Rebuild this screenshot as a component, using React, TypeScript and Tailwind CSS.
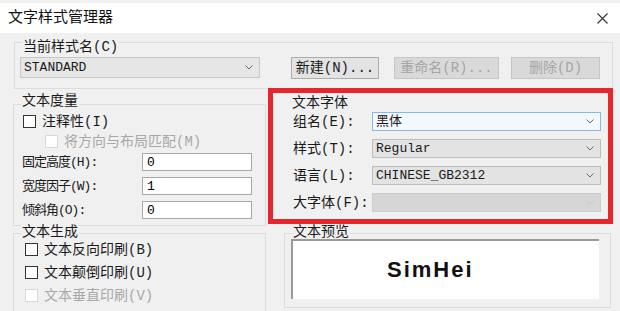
import React from "react";

const MONO = "font-['Liberation_Mono','Noto_Sans_CJK_SC',monospace]";

function Chevron({ faint }: { faint?: boolean }) {
  return (
    <svg width="8" height="5" viewBox="0 0 8 5" className="shrink-0">
      <polyline
        points="0.5,0.5 4,4 7.5,0.5"
        fill="none"
        stroke={faint ? "#c8c8c8" : "#6a6a6a"}
        strokeWidth="1"
      />
    </svg>
  );
}

function Combo({
  value,
  tone,
  className,
}: {
  value?: string;
  tone: "focus" | "gray" | "disabled";
  className: string;
}) {
  const look =
    tone === "focus"
      ? "bg-[#f2f8fd] border-[#86b8e8]"
      : tone === "gray"
        ? "bg-[#e3e3e3] border-[#bdbdbd]"
        : "bg-[#d6d6d6] border-[#cdcdcd]";
  return (
    <div
      className={`flex items-center justify-between border pl-[3px] pr-[6px] ${look} ${className}`}
    >
      <span className={`${MONO} text-[13px] leading-none text-[#1a1a1a]`}>{value}</span>
      <Chevron faint={tone === "disabled"} />
    </div>
  );
}

function Check({ label, disabled, className }: { label: string; disabled?: boolean; className?: string }) {
  return (
    <div className={`flex h-[17px] items-center ${className ?? ""}`}>
      <div
        className={`h-[13px] w-[13px] shrink-0 border bg-white ${disabled ? "border-[#d8d8d8]" : "border-[#333333]"}`}
      />
      <span className={`ml-[6px] text-[14px] leading-none ${disabled ? "text-[#a8a8a8]" : "text-[#1a1a1a]"}`}>
        {label}
      </span>
    </div>
  );
}

function Field({ label, value, className }: { label: string; value: string; className?: string }) {
  return (
    <div className={`flex h-[18px] items-center ${className ?? ""}`}>
      <span className="w-[128px] pl-[8px] text-[13px] leading-none tracking-[-1px] text-[#1a1a1a]">{label}</span>
      <div className="flex h-[18px] w-[110px] items-center border border-[#a9a9a9] bg-white pl-[4px]">
        <span className={`${MONO} text-[13px] leading-none`}>{value}</span>
      </div>
    </div>
  );
}

function Button({ label, disabled, className }: { label: string; disabled?: boolean; className: string }) {
  return (
    <div
      className={`flex h-[22px] items-center justify-center border text-[14px] leading-none ${
        disabled ? "border-[#c6c6c6] bg-[#d9d9d9] text-[#a6a6a6]" : "border-[#adadad] bg-[#e3e3e3] text-[#1a1a1a]"
      } ${className}`}
    >
      {label}
    </div>
  );
}

function Legend({ children, className }: { children: React.ReactNode; className: string }) {
  return (
    <div
      className={`ml-[7px] h-[16px] w-fit bg-[#f0f0f0] px-[1px] text-[14px] leading-[16px] text-[#1a1a1a] ${className}`}
    >
      {children}
    </div>
  );
}

export default function App() {
  return (
    <div className="h-[311px] w-[620px] overflow-hidden bg-[#f0f0f0] font-['Liberation_Mono','Noto_Sans_CJK_SC',monospace] text-black">
      {/* title bar */}
      <div className="mt-[3px] flex h-[30px] items-center justify-between bg-white pl-[8px] pr-[12px]">
        <span className="text-[15px] leading-none text-[#111]">文字样式管理器</span>
        <svg width="11" height="11" viewBox="0 0 11 11">
          <path d="M0.5 0.5 L10.5 10.5 M10.5 0.5 L0.5 10.5" stroke="#3a3a3a" strokeWidth="1.2" />
        </svg>
      </div>

      {/* current style */}
      <div className="ml-[14px] mt-[9px] h-[47px] w-[599px] border border-[#dcdcdc]">
        <Legend className="-mt-[4px]">当前样式名(C)</Legend>
        <div className="mt-[2px] flex items-start">
          <Combo value="STANDARD" tone="gray" className="ml-[5px] h-[21px] w-[240px] !border-[#c8c8c8] !bg-[#e6e6e6]" />
          <Button label="新建(N)..." className="ml-[31px] w-[88px]" />
          <Button label="重命名(R)..." disabled className="ml-[15px] w-[105px]" />
          <Button label="删除(D)" disabled className="ml-[12px] w-[89px]" />
        </div>
      </div>

      <div className="flex">
        {/* left column */}
        <div className="ml-[13px] w-[253px]">
          <div className="mt-[15px] h-[122px] border border-[#dcdcdc]">
            <Legend className="-mt-[12px]">文本度量</Legend>
            <Check label="注释性(I)" className="ml-[9px] mt-[4px]" />
            <Check label="将方向与布局匹配(M)" disabled className="ml-[31px] mt-[3px]" />
            <Field label="固定高度(H):" value="0" className="mt-[3px]" />
            <Field label="宽度因子(W):" value="1" className="mt-[6px]" />
            <Field label="倾斜角(O):" value="0" className="mt-[6px]" />
          </div>

          <div className="mt-[7px] h-[92px] border border-[#dcdcdc]">
            <Legend className="-mt-[10px]">文本生成</Legend>
            <Check label="文本反向印刷(B)" className="ml-[11px] mt-[1px]" />
            <Check label="文本颠倒印刷(U)" className="ml-[11px] mt-[6px]" />
            <Check label="文本垂直印刷(V)" disabled className="ml-[11px] mt-[6px]" />
          </div>
        </div>

        {/* right column */}
        <div className="ml-[2px] w-[345px]">
          <div className="-mt-[1px] h-[136px] border-[5px] border-[#e5262c]">
            <div className="ml-[19px] mt-[2px] h-[16px] text-[14px] leading-[16px] text-[#1a1a1a]">文本字体</div>
            {[
              { label: "组名(E):", value: "黑体", tone: "focus" as const },
              { label: "样式(T):", value: "Regular", tone: "gray" as const },
              { label: "语言(L):", value: "CHINESE_GB2312", tone: "gray" as const },
              { label: "大字体(F):", value: "", tone: "disabled" as const },
            ].map((row, i) => (
              <div key={row.label} className={`flex items-center ${i === 0 ? "mt-[1px]" : "mt-[8px]"}`}>
                <span className="ml-[20px] w-[79px] text-[14px] leading-none text-[#1a1a1a]">{row.label}</span>
                <Combo value={row.value} tone={row.tone} className="h-[19px] w-[229px]" />
              </div>
            ))}
          </div>

          <div className="ml-[16px] mt-[9px] h-[75px] w-[327px] border border-[#dcdcdc]">
            <Legend className="-mt-[10px]">文本预览</Legend>
            <div className="ml-[6px] mt-[-1px] flex h-[60px] w-[308px] items-center border-l-2 border-t-2 border-[#9a9a9a] bg-white pl-[94px]">
              <span className="font-['Liberation_Sans',sans-serif] text-[22px] font-bold leading-none tracking-[2px] text-[#111]">
                SimHei
              </span>
            </div>
          </div>
        </div>
      </div>
    </div>
  );
}
